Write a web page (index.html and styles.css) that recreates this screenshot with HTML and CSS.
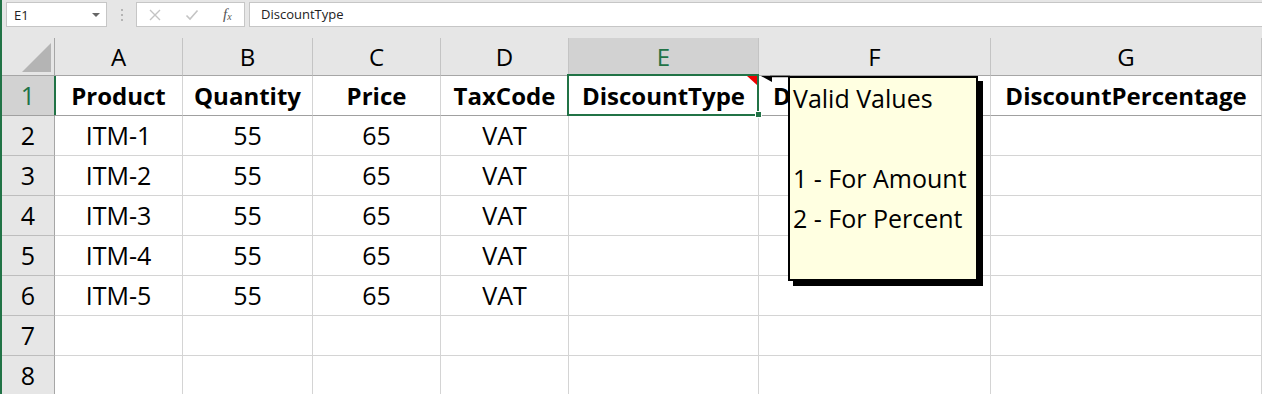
FILE: index.html
```html
<!DOCTYPE html>
<html>
  <head>
    <link rel="stylesheet" href="styles.css">
  </head>
  <body>
    <div class="frame">
      <!-- formula bar -->
      <div class="formula-bar">
        <div class="name-box">
          <span>E1</span>
          <span class="caret"></span>
        </div>
        <div class="grip"><i></i><i></i><i></i></div>
        <div class="fx-box">
          <svg class="ico" width="14" height="14" viewBox="0 0 14 14">
            <path d="M2 2 L12 12 M12 2 L2 12" stroke="#c4c4c4" stroke-width="1.4" fill="none"/>
          </svg>
          <svg class="ico" width="14" height="14" viewBox="0 0 14 14">
            <path d="M1.5 7.5 L5 11 L12.5 2.5" stroke="#c4c4c4" stroke-width="1.6" fill="none"/>
          </svg>
          <span class="fx">f<sub>x</sub></span>
        </div>
        <div class="formula-input">DiscountType</div>
      </div>

      <!-- sheet grid -->
      <div class="sheet">
        <div class="corner"><span class="corner-tri"></span></div>
        <div class="col-head">A</div>
        <div class="col-head">B</div>
        <div class="col-head">C</div>
        <div class="col-head">D</div>
        <div class="col-head active">E</div>
        <div class="col-head">F</div>
        <div class="col-head">G</div>

        <div class="row-head active">1</div>
        <div class="cell title">Product</div>
        <div class="cell title">Quantity</div>
        <div class="cell title">Price</div>
        <div class="cell title">TaxCode</div>
        <div class="cell title selected">
          DiscountType
          <span class="note-mark"></span>
          <span class="sel-box"></span>
          <span class="fill-handle"></span>
          <svg class="note-arrow" width="32" height="10" viewBox="0 0 32 10">
            <line x1="12" y1="2.5" x2="32" y2="2.5" stroke="#000" stroke-width="1.5"/>
            <polygon points="3,2 14,2 14,8" fill="#000"/>
          </svg>
          <div class="comment">
            <div>Valid Values</div>
            <div>&nbsp;</div>
            <div>1 - For Amount</div>
            <div>2 - For Percent</div>
          </div>
        </div>
        <div class="cell title">DiscountAmount</div>
        <div class="cell title">DiscountPercentage</div>

        <div class="row-head">2</div>
        <div class="cell">ITM-1</div><div class="cell">55</div><div class="cell">65</div><div class="cell">VAT</div>
        <div class="cell"></div><div class="cell"></div><div class="cell"></div>

        <div class="row-head">3</div>
        <div class="cell">ITM-2</div><div class="cell">55</div><div class="cell">65</div><div class="cell">VAT</div>
        <div class="cell"></div><div class="cell"></div><div class="cell"></div>

        <div class="row-head">4</div>
        <div class="cell">ITM-3</div><div class="cell">55</div><div class="cell">65</div><div class="cell">VAT</div>
        <div class="cell"></div><div class="cell"></div><div class="cell"></div>

        <div class="row-head">5</div>
        <div class="cell">ITM-4</div><div class="cell">55</div><div class="cell">65</div><div class="cell">VAT</div>
        <div class="cell"></div><div class="cell"></div><div class="cell"></div>

        <div class="row-head">6</div>
        <div class="cell">ITM-5</div><div class="cell">55</div><div class="cell">65</div><div class="cell">VAT</div>
        <div class="cell"></div><div class="cell"></div><div class="cell"></div>

        <div class="row-head">7</div>
        <div class="cell"></div><div class="cell"></div><div class="cell"></div><div class="cell"></div>
        <div class="cell"></div><div class="cell"></div><div class="cell"></div>

        <div class="row-head">8</div>
        <div class="cell"></div><div class="cell"></div><div class="cell"></div><div class="cell"></div>
        <div class="cell"></div><div class="cell"></div><div class="cell"></div>
      </div>
    </div>
  </body>
</html>
```

FILE: styles.css
```css
body {
  margin: 0;
  height: 394px;
  overflow: hidden;
  background: #fff;
  border-left: 2px solid #217346;
  font-family: "Open Sans", "Noto Sans", sans-serif;
  color: #000;
}

.frame {
  position: relative;
}

/* Formula bar */
.formula-bar {
  display: flex;
  align-items: flex-start;
  height: 38px;
  padding-top: 2px;
  box-sizing: border-box;
  background: #e6e6e6;
}

.name-box {
  display: flex;
  align-items: center;
  justify-content: space-between;
  margin-left: 4px;
  width: 101px;
  height: 25px;
  padding: 0 6px 0 7px;
  box-sizing: border-box;
  background: #fff;
  border: 1px solid #c6c6c6;
  font-size: 13px;
  color: #222;
}

.caret {
  width: 0;
  height: 0;
  border-left: 4px solid transparent;
  border-right: 4px solid transparent;
  border-top: 4px solid #666;
}

.grip {
  display: flex;
  flex-direction: column;
  gap: 3px;
  margin: 7px 13px 0 14px;
}

.grip i {
  display: block;
  width: 2px;
  height: 2px;
  background: #b4b4b4;
}

.fx-box {
  display: flex;
  align-items: center;
  width: 109px;
  height: 25px;
  box-sizing: border-box;
  padding-left: 11px;
  gap: 23px;
  background: #fff;
  border: 1px solid #c6c6c6;
}

.fx {
  font-family: "Liberation Serif", serif;
  font-style: italic;
  font-size: 15px;
  color: #555;
  margin-left: 1px;
}

.fx sub {
  font-size: 10px;
  vertical-align: -1px;
}

.formula-input {
  flex: 1;
  height: 25px;
  margin-left: 4px;
  padding-left: 11px;
  box-sizing: border-box;
  background: #fff;
  border: 1px solid #c6c6c6;
  border-right: none;
  font-size: 13px;
  line-height: 23px;
  color: #222;
}

/* Sheet */
.sheet {
  display: grid;
  grid-template-columns: 53px 128px 130px 128px 128px 190px 232px 1fr;
  grid-template-rows: 38px repeat(8, 40px);
}

.corner {
  position: relative;
  background: #e6e6e6;
  border-right: 1px solid #a6a6a6;
  border-bottom: 1px solid #a6a6a6;
}

.corner-tri {
  position: absolute;
  left: 20px;
  top: 5px;
  width: 0;
  height: 0;
  border-left: 29px solid transparent;
  border-bottom: 29px solid #b4b4b4;
}

.col-head {
  display: flex;
  justify-content: center;
  align-items: center;
  background: #e6e6e6;
  border-right: 1px solid #c4c4c4;
  border-bottom: 1px solid #a6a6a6;
  font-size: 24px;
  line-height: 37px;
}

.col-head.active {
  background: #d2d2d2;
  color: #217346;
}

.row-head {
  text-align: center;
  background: #e6e6e6;
  border-right: 1px solid #a6a6a6;
  border-bottom: 1px solid #bdbdbd;
  font-size: 25px;
  line-height: 39px;
}

.row-head.active {
  background: #d2d2d2;
  color: #217346;
  border-right: 2px solid #217346;
  margin-right: -1px;
  border-bottom-color: #a0a0a0;
}

.cell {
  text-align: center;
  white-space: nowrap;
  overflow: hidden;
  border-right: 1px solid #d4d4d4;
  border-bottom: 1px solid #d4d4d4;
  font-size: 25px;
  line-height: 39px;
}

.cell.title {
  font-weight: 700;
  font-size: 24px;
  border-bottom-color: #a0a0a0;
}

.cell.selected {
  position: relative;
  overflow: visible;
}

.sel-box {
  position: absolute;
  left: -2px;
  top: -2px;
  width: 192px;
  height: 42px;
  box-sizing: border-box;
  border: 2px solid #217346;
}

.fill-handle {
  position: absolute;
  left: 186px;
  top: 35px;
  width: 5px;
  height: 5px;
  background: #217346;
  border: 1px solid #fff;
}

.note-mark {
  position: absolute;
  left: 178px;
  top: 0;
  width: 0;
  height: 0;
  border-left: 10px solid transparent;
  border-top: 9px solid #e00;
}

.note-arrow {
  position: absolute;
  left: 189px;
  top: -2px;
  z-index: 4;
}

/* Comment popup */
.comment {
  position: absolute;
  left: 219px;
  top: 0;
  z-index: 5;
  width: 190px;
  height: 205px;
  box-sizing: border-box;
  padding-left: 3px;
  background: #ffffe1;
  border: 2px solid #000;
  box-shadow: 5px 5px 0 #000;
  text-align: left;
  font-weight: 400;
  font-size: 25px;
  line-height: 40px;
}
```
